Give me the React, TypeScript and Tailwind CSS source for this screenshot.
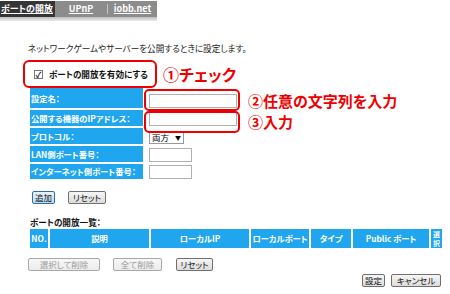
import React from "react";

const font = "font-['Noto_Sans_CJK_JP','Noto_Sans',sans-serif] [font-feature-settings:'palt']";

function Btn({ children, className = "" }: { children: React.ReactNode; className?: string }) {
  return (
    <button
      className={`h-[13px] px-0 border border-[#707070] rounded-[2px] bg-gradient-to-b from-[#f6f6f6] to-[#dcdcdc] text-[8.5px] leading-[11px] text-[#111] whitespace-nowrap overflow-hidden text-center ${className}`}
    >
      {children}
    </button>
  );
}

const rows = [
  { label: "設定名：", h: "h-[20px]", input: "w-[88px] h-[14px]" },
  { label: "公開する機器のIPアドレス：", h: "h-[16px]", input: "w-[88px] h-[15px]" },
  { label: "プロトコル：", h: "h-[16px]", select: true },
  { label: "LAN側ポート番号：", h: "h-[16px]", input: "w-[43px] h-[14px]" },
  { label: "インターネット側ポート番号：", h: "h-[15px]", input: "w-[43px] h-[14px]" },
];

const cols = [
  { t: "NO.", w: "w-[18px]" },
  { t: "説明", w: "w-[99px]" },
  { t: "ローカルIP", w: "w-[98px]" },
  { t: "ローカルポート", w: "w-[58px]" },
  { t: "タイプ", w: "w-[40px]" },
  { t: "Public ポート", w: "w-[76px]" },
];

export default function App() {
  return (
    <div className={`relative w-[450px] h-[294px] overflow-hidden bg-white ${font}`}>
      {/* tabs */}
      <div className="pt-[1px]">
        <div className="flex w-[157px] h-[16px] text-[9px] font-bold text-white leading-[16px]">
          <div className="w-[55px] bg-[#353535] underline pl-[1px] whitespace-nowrap">ポートの開放</div>
          <div className="flex flex-1 bg-[#8c8c8c]">
            <div className="w-[52px] text-center underline">UPnP</div>
            <div className="w-[1px] my-[3px] bg-[#c4c4c4]" />
            <div className="flex-1 text-center underline">iobb.net</div>
          </div>
        </div>
        <div className="w-[157px] h-[4px] bg-gradient-to-b from-[#bdbdbd] to-[#ececec]" />
      </div>

      <p className="mt-[21px] ml-[28px] text-[8.6px] leading-[12px] text-[#222]">
        ネットワークゲームやサーバーを公開するときに設定します。
      </p>

      {/* enable checkbox */}
      <div className="flex items-start mt-[6px] h-[27px]">
        <div className="ml-[23px] w-[134px] h-[28px] border-2 border-[#ee0000] rounded-[6px] flex items-center pl-[9px] gap-[6px]">
          <span className="w-[9px] h-[9px] border border-[#777] bg-white text-[8px] leading-[7px] text-center text-[#223] font-bold">✓</span>
          <span className="text-[8.6px] font-bold text-[#111]">ポートの開放を有効にする</span>
        </div>
        <span className="ml-[6px] mt-[3px] text-[16px] leading-[22px] font-bold text-[#ee0000]">①チェック</span>
      </div>

      {/* form */}
      <div className="relative flex flex-col gap-[2px] ml-[30px] mt-[1px]">
        {rows.map((r) => (
          <div key={r.label} className={`flex items-end gap-[6px] ${r.h}`}>
            <div className="w-[113px] h-full bg-[#1fa6ef] text-white text-[8.3px] font-bold leading-[15px] pl-[1px] flex items-center whitespace-nowrap overflow-hidden">
              {r.label}
            </div>
            {r.select ? (
              <div className="w-[35px] h-[13px] border border-[#999] bg-white flex items-center justify-between px-[2px] text-[8.5px] leading-[11px]">
                <span>両方</span>
                <span className="text-[6px]">▼</span>
              </div>
            ) : (
              <div className={`${r.input} border border-[#b0b0b0] bg-white`} />
            )}
          </div>
        ))}
        <div className="absolute left-[114px] top-[1px] w-[96px] h-[22px] border-2 border-[#ee0000] rounded-[5px]" />
        <div className="absolute left-[114px] top-[23px] w-[96px] h-[22px] border-2 border-[#ee0000] rounded-[5px]" />
        <div className="absolute left-[218px] top-[4px] text-[15px] leading-[18px] font-bold text-[#ee0000] whitespace-nowrap">
          ②任意の文字列を入力
        </div>
        <div className="absolute left-[218px] top-[25px] text-[15px] leading-[18px] font-bold text-[#ee0000] whitespace-nowrap">
          ③入力
        </div>
      </div>

      <div className="flex gap-[13px] ml-[32px] mt-[12px]">
        <Btn className="!border-[#2f6fa8] !from-[#e8f4fb] !to-[#bfdcef] w-[23px]">追加</Btn>
        <Btn className="w-[38px]">リセット</Btn>
      </div>

      <p className="ml-[30px] mt-[12px] text-[8.6px] font-bold leading-[12px] text-[#111]">ポートの開放一覧：</p>

      <div className="flex gap-[2px] ml-[30px] mt-[1px] h-[19px]">
        {cols.map((c) => (
          <div key={c.t} className={`${c.w} bg-[#1fa6ef] text-white text-[8.3px] font-bold flex items-center justify-center whitespace-nowrap`}>
            {c.t}
          </div>
        ))}
        <div className="w-[11px] bg-[#1fa6ef] text-white text-[7px] font-bold leading-[9px] text-center pt-[0.5px]">
          選<br />択
        </div>
      </div>

      <div className="flex ml-[28px] mt-[10px]">
        <Btn className="w-[72px] !border-[#a8a8a8] !from-[#f7f7f7] !to-[#ececec] !text-[#999]">選択して削除</Btn>
        <Btn className="ml-[13px] w-[49px] !border-[#a8a8a8] !from-[#f7f7f7] !to-[#ececec] !text-[#999]">全て削除</Btn>
        <Btn className="ml-[14px] w-[37px]">リセット</Btn>
      </div>

      <div className="flex justify-end gap-[6px] mr-[9px] mt-[3px]">
        <Btn className="w-[23px]">設定</Btn>
        <Btn className="w-[50px]">キャンセル</Btn>
      </div>
    </div>
  );
}
